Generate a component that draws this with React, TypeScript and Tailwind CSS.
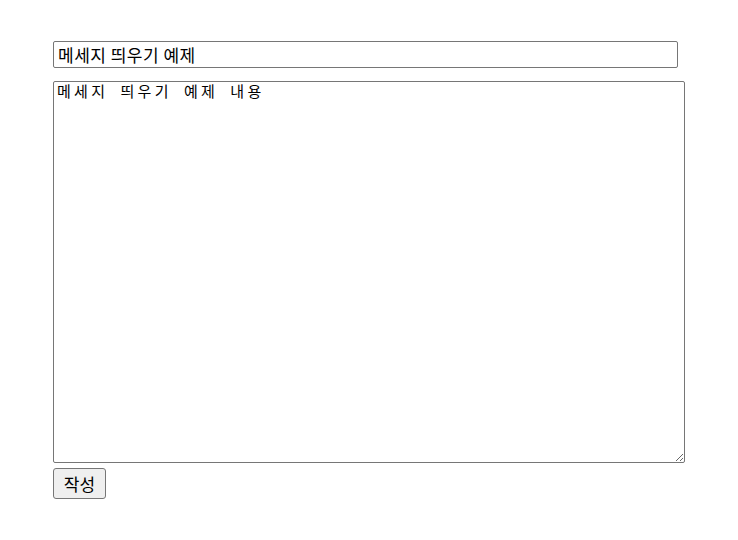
import React from "react";

export default function App() {
  return (
    <div className="min-h-[540px] w-[738px] bg-white pl-[53px] pt-[41px] font-['Noto_Sans_CJK_KR',sans-serif]">
      <div className="flex flex-col items-start">
        <input
          type="text"
          defaultValue="메세지 띄우기 예제"
          className="box-border h-[27px] w-[625px] rounded-[2px] border border-[#767676] bg-white px-[4px] font-['Noto_Sans_CJK_KR',sans-serif] text-[17px] leading-[20px] tracking-[0.5px] text-black outline-none"
        />
        <textarea
          defaultValue="메세지 띄우기 예제 내용"
          className="mt-[13px] box-border h-[382px] w-[632px] rounded-[2px] border border-[#767676] bg-white px-[3px] py-[0px] font-['Noto_Sans_CJK_KR',monospace] text-[15px] leading-[18px] tracking-[3.3px] [word-spacing:5.5px] text-black outline-none"
        />
        <button className="mt-[5px] box-border h-[31px] w-[53px] rounded-[3px] border border-[#767676] bg-[#efefef] font-['Noto_Sans_CJK_KR',sans-serif] text-[17px] text-black">
          작성
        </button>
      </div>
    </div>
  );
}
